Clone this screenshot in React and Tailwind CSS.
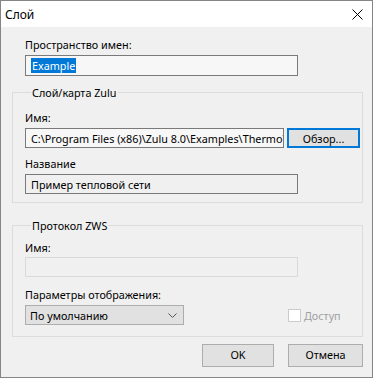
import React from "react";

const font = { fontFamily: '"Noto Sans", "Liberation Sans", sans-serif' };

function Label({ children, className = "" }) {
  return <div className={"h-[15px] leading-[15px] text-[10.8px] text-black whitespace-nowrap " + className}>{children}</div>;
}

export default function App() {
  return (
    <div
      className="w-[373px] h-[378px] border border-[#858585] bg-[#f0f0f0] flex flex-col overflow-hidden"
      style={font}
    >
      {/* title bar */}
      <div className="h-[26px] bg-white flex items-center justify-between pl-[4px] pr-[9px] shrink-0">
        <span className="text-[12px] leading-[15px] text-black">Слой</span>
        <svg width="11" height="11" viewBox="0 0 11 11" className="block">
          <path d="M0.5 0.5 L10.5 10.5 M10.5 0.5 L0.5 10.5" stroke="#000" strokeWidth="1" />
        </svg>
      </div>

      <div className="flex flex-col pl-[11px] pr-[9px]">
        <div className="pl-[13px] mt-[10px]">
          <Label>Пространство имен:</Label>
          <div className="mt-[3px] w-[273px] h-[21px] border border-[#7a7a7a] bg-[#f7f7f7] flex items-center pl-[5px]">
            <span className="bg-[#0078d7] text-white text-[10.8px] leading-[15px] px-[1px]">Example</span>
          </div>
        </div>

        {/* group 1 */}
        <fieldset className="mt-[9px] border border-[#dcdcdc] pl-[12px] pr-[2px] pb-[8px] w-[351px]">
          <legend className="ml-[6px] px-[1px] h-[15px] leading-[15px] text-[10.8px] text-black">Слой/карта Zulu</legend>
          <Label className="mt-[10px]">Имя:</Label>
          <div className="mt-[3px] flex items-center gap-[3px]">
            <div className="w-[259px] h-[20px] border border-[#7a7a7a] bg-[#f7f7f7] flex items-center pl-[5px] overflow-hidden">
              <span className="text-[10.8px] leading-[15px] text-black whitespace-nowrap">C:\Program Files (x86)\Zulu 8.0\Examples\Thermo\Kotel</span>
            </div>
            <button className="w-[73px] h-[20px] border-2 border-[#0078d7] bg-[#e1e1e1] text-[10.8px] leading-[15px] text-black flex items-center justify-center">
              Обзор...
            </button>
          </div>
          <Label className="mt-[8px]">Название</Label>
          <div className="mt-[3px] w-[273px] h-[20px] border border-[#7a7a7a] bg-[#f0f0f0] flex items-center pl-[5px]">
            <span className="text-[10.8px] leading-[15px] text-black whitespace-nowrap">Пример тепловой сети</span>
          </div>
        </fieldset>

        {/* group 2 */}
        <fieldset className="mt-[15px] border border-[#dcdcdc] pl-[12px] pr-[2px] pb-[11px] w-[351px]">
          <legend className="ml-[6px] px-[1px] h-[15px] leading-[15px] text-[10.8px] text-black">Протокол ZWS</legend>
          <Label className="mt-[7px]">Имя:</Label>
          <div className="mt-[2px] w-[273px] h-[20px] border border-[#d9d9d9] bg-[#f0f0f0]" />
          <Label className="mt-[10px]">Параметры отображения:</Label>
          <div className="mt-[3px] flex items-center">
            <div className="w-[159px] h-[20px] border border-[#adadad] bg-[#e1e1e1] flex items-center justify-between pl-[4px] pr-[6px]">
              <span className="text-[10.8px] leading-[15px] text-black">По умолчанию</span>
              <svg width="9" height="5" viewBox="0 0 9 5" className="block">
                <path d="M0.5 0.5 L4.5 4.5 L8.5 0.5" stroke="#555" strokeWidth="1" fill="none" />
              </svg>
            </div>
            <div className="ml-[104px] flex items-center gap-[3px]">
              <div className="w-[13px] h-[13px] border border-[#cccccc] bg-white" />
              <span className="text-[10.8px] leading-[15px] text-[#a0a0a0]">Доступ</span>
            </div>
          </div>
        </fieldset>

        <div className="mt-[7px] flex justify-end gap-[14px] pr-[0px]">
          <button className="w-[72px] h-[23px] border border-[#adadad] bg-[#e1e1e1] text-[10.8px] text-black flex items-center justify-center">
            OK
          </button>
          <button className="w-[75px] h-[23px] border border-[#adadad] bg-[#e1e1e1] text-[10.8px] text-black flex items-center justify-center">
            Отмена
          </button>
        </div>
      </div>
    </div>
  );
}
